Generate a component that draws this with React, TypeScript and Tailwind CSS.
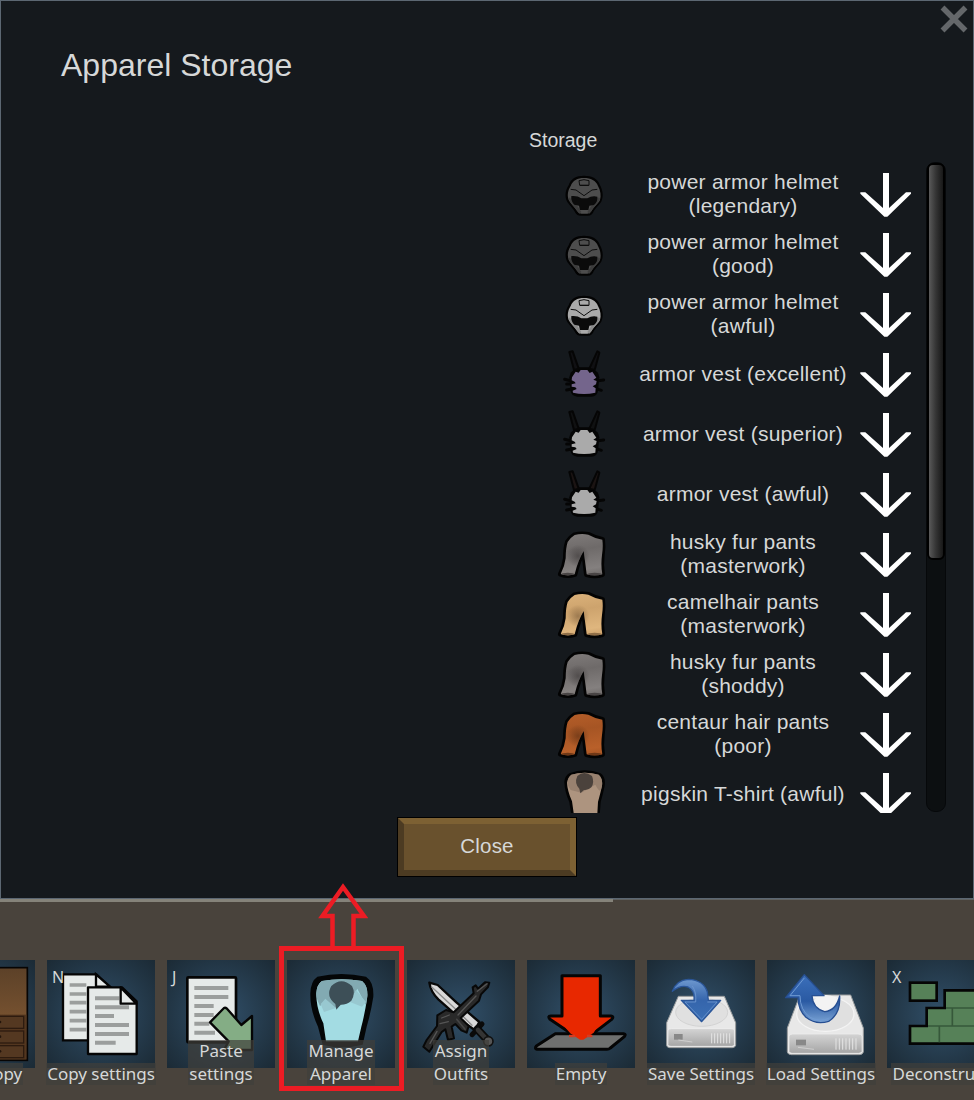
import React from "react";

const Helmet = ({ light, dark }: { light: string; dark: string }) => (
  <svg viewBox="42 12 180 180" className="h-[60px] w-[60px] shrink-0">
    <path d="M132 47 C108 47 92 56 86 76 C76 90 74 108 80 122 C86 134 98 142 106 158 Q111 167 122 167 L144 167 Q154 167 159 158 C166 142 180 134 185 122 C191 108 188 90 180 76 C174 56 156 47 132 47Z" fill="#030303" />
    <path d="M132 54 C112 54 98 62 92 78 C82 94 82 108 86 120 C92 132 104 140 112 154 Q116 161 124 161 L142 161 Q150 161 154 154 C162 138 174 132 180 120 C184 108 182 92 174 78 C168 62 152 54 132 54Z" fill={light} />
    <path d="M86 116 C92 132 104 140 112 154 L118 161 L124 156 L112 138 L96 126 L90 112Z M180 116 C174 132 162 140 154 154 L148 161 L142 156 L154 138 L170 126 L176 112Z" fill={dark} />
    <path d="M94 108 Q112 106 124 115 L142 115 Q156 106 172 110 Q175 124 162 135 L148 137 L145 150 L120 150 L117 137 L103 134 Q92 124 94 108Z" fill="#0b0b0b" />
    <path d="M92 88 L108 90 L132 107 L156 90 L172 88 M119 76 L117 62 Q132 56 147 62 L147 76Z M120 76 H146" fill="none" stroke="#0d0d0d" strokeWidth="3" />
  </svg>
);

const Vest = ({ body, strap }: { body: string; strap: string }) => (
  <svg viewBox="42 12 180 180" className="h-[60px] w-[60px] shrink-0">
    <path d="M110 82 L154 82 L174 98 L178 112 L174 152 Q172 169 154 170 L112 170 Q94 168 92 154 L88 112 L92 98Z" fill="#050505" />
    <path d="M88 36 L98 34 L116 86 L102 90Z M172 34 L178 38 L164 90 L148 86Z" fill={strap} stroke="#050505" strokeWidth="6" strokeLinejoin="round" />
    <path d="M74 118 l18 4 M174 122 l17 -2 M80 132 l16 0 M80 150 l20 -4 M168 146 l16 5" stroke="#050505" strokeWidth="9" strokeLinecap="round" />
    <path d="M107 95 L116 98 L122 90 L142 90 L149 99 L157 95 L169 113 L160 119 L170 123 L168 133 L158 139 L167 145 L166 158 Q132 166 99 158 L98 152 L110 147 L106 142 L95 140 L95 133 L107 130 L104 125 L95 121 L96 112Z" fill={body} />
  </svg>
);

const pantsPath =
  "M104 45 Q124 40 145 44 Q162 54 187 59 Q190 80 186 105 Q182 135 187 163 Q164 170 140 163 Q136 130 131 93 Q114 120 104 163 Q82 170 62 162 Q74 140 77 115 Q77 84 83 66 Q92 52 104 45Z";

const Pants = ({ id, light, mid, dark }: { id: string; light: string; mid: string; dark: string }) => (
  <svg viewBox="42 12 180 180" className="h-[60px] w-[60px] shrink-0">
    <defs>
      <linearGradient id={id} x1="0" y1="0" x2="0.15" y2="1">
        <stop offset="0" stopColor={light} />
        <stop offset="0.45" stopColor={mid} />
        <stop offset="0.85" stopColor={light} />
        <stop offset="1" stopColor={mid} />
      </linearGradient>
      <radialGradient id={id + "s"}>
        <stop offset="0" stopColor={dark} stopOpacity="0.8" />
        <stop offset="1" stopColor={dark} stopOpacity="0" />
      </radialGradient>
      <clipPath id={id + "c"}>
        <path d={pantsPath} />
      </clipPath>
    </defs>
    <path d={pantsPath} fill="#030303" stroke="#030303" strokeWidth="16" strokeLinejoin="round" />
    <g clipPath={`url(#${id}c)`}>
      <rect x="50" y="30" width="150" height="150" fill={`url(#${id})`} />
      <ellipse cx="114" cy="108" rx="34" ry="34" fill={`url(#${id}s)`} />
      <ellipse cx="83" cy="163" rx="20" ry="5" fill={dark} />
      <ellipse cx="164" cy="163" rx="22" ry="5" fill={dark} />
    </g>
  </svg>
);

const Shirt = () => (
  <svg viewBox="42 252 180 180" className="h-[60px] w-[60px] shrink-0">
    <path d="M88 280 Q134 262 182 280 Q198 292 194 318 Q188 346 182 366 L178 420 L96 420 L88 366 Q74 336 73 306 Q74 288 88 280Z" fill="#030303" />
    <path d="M94 284 Q134 272 176 284 Q189 296 186 318 Q180 344 174 366 L171 420 L104 420 L96 364 Q82 332 81 308 Q84 292 94 284Z" fill="#ad947f" />
    <path d="M94 284 Q134 272 176 284 Q189 296 186 318 L182 332 Q176 334 166 314 L124 338 L92 330 L82 314 Q82 292 94 284Z" fill="#8f7968" opacity="0.7" />
    <path d="M112 288 Q132 270 156 288 Q164 308 154 322 Q144 332 132 330 L121 340 L118 326 Q102 310 112 288Z" fill="#4b423c" />
  </svg>
);

const DownArrow = () => (
  <svg viewBox="948 12 180 180" className="h-[60px] w-[60px] shrink-0">
    <path d="M1029 39 H1047 V144 L1098 97 H1113 V101 L1042 170 H1033 L961 101 V97 H976 L1029 144Z" fill="#fff" />
  </svg>
);

const gray = { light: "#84807f", mid: "#6e6a69", dark: "#484444" };
const rows: { icon: React.ReactNode; lines: string[] }[] = [
  { icon: <Helmet light="#4d4d4d" dark="#3c3c3c" />, lines: ["power armor helmet", "(legendary)"] },
  { icon: <Helmet light="#4d4d4d" dark="#3c3c3c" />, lines: ["power armor helmet", "(good)"] },
  { icon: <Helmet light="#aaaaaa" dark="#8c8c8c" />, lines: ["power armor helmet", "(awful)"] },
  { icon: <Vest body="#74658c" strap="#101013" />, lines: ["armor vest (excellent)"] },
  { icon: <Vest body="#aaaaaa" strap="#101112" />, lines: ["armor vest (superior)"] },
  { icon: <Vest body="#aaaaaa" strap="#1b1413" />, lines: ["armor vest (awful)"] },
  { icon: <Pants id="p1" {...gray} />, lines: ["husky fur pants", "(masterwork)"] },
  { icon: <Pants id="p2" light="#dfb67e" mid="#cda36d" dark="#8f6e47" />, lines: ["camelhair pants", "(masterwork)"] },
  { icon: <Pants id="p3" {...gray} />, lines: ["husky fur pants", "(shoddy)"] },
  { icon: <Pants id="p4" light="#b9602a" mid="#a65524" dark="#6e3817" />, lines: ["centaur hair pants", "(poor)"] },
  { icon: <Shirt />, lines: ["pigskin T-shirt (awful)"] },
];

const Wardrobe = () => (
  <svg viewBox="-219 240 324 324" className="h-full w-full">
    <defs>
      <linearGradient id="wood" x1="0" y1="0" x2="0" y2="1">
        <stop offset="0" stopColor="#5c4128" />
        <stop offset="0.5" stopColor="#74502f" />
        <stop offset="1" stopColor="#4e331f" />
      </linearGradient>
    </defs>
    <rect x="-195" y="263" width="277" height="278" fill="url(#wood)" stroke="#070504" strokeWidth="5" />
    <rect x="-192" y="404" width="271" height="134" fill="#53361f" />
    {[409, 453, 497].map((y) => (
      <g key={y}>
        <rect x="-150" y={y} width="221" height="36" fill="#543821" stroke="#2d1b0f" strokeWidth="4" />
        <circle cx="0" cy={y + 17} r="4" fill="#24150c" />
      </g>
    ))}
  </svg>
);

const CopyIcon = () => (
  <svg viewBox="141 240 324 324" className="h-full w-full">
    <g stroke="#050505" strokeWidth="7" fill="#e6eae9">
      <path d="M189 283 H289 L338 330 V481 H189Z" />
      <path d="M288 283 V320 H330Z" />
    </g>
    <path d="M209 315h50M209 342h50M209 368h50M209 395h50M209 422h50M209 449h50" stroke="#9b9e9d" strokeWidth="11" />
    <g stroke="#050505" strokeWidth="7" fill="#e6eae9" strokeLinejoin="round">
      <path d="M264 322 H366 L410 364 V522 H264Z" />
      <path d="M285 355h73M285 382h102" stroke="#9b9e9d" strokeWidth="12" />
      <path d="M362 322 V371 H409Z" />
    </g>
    <path d="M285 408h57M285 435h102M285 462h102M285 488h62" stroke="#9b9e9d" strokeWidth="12" />
  </svg>
);

const PasteIcon = () => (
  <svg viewBox="501 240 324 324" className="h-full w-full">
    <rect x="562" y="292" width="146" height="195" rx="3" fill="#e6eae9" stroke="#050505" strokeWidth="8" />
    <path d="M583 324h102M583 351h102M583 378h58M583 405h58M583 431h45M583 458h62" stroke="#9b9e9d" strokeWidth="12" />
    <path d="M672 384 Q676 382 681 386 L724 435 L756 408 V510 H672 L686 484 L630 427Z" fill="#84ad85" stroke="#050505" strokeWidth="7" strokeLinejoin="round" />
  </svg>
);

const ManageIcon = () => (
  <svg viewBox="51 240 324 324" className="h-full w-full">
    <path d="M142 290 Q214 274 288 290 Q312 306 310 350 Q302 400 290 440 L278 494 Q214 510 158 494 L144 440 Q120 390 121 340 Q122 304 142 290Z" fill="#040607" />
    <path d="M156 303 Q214 292 276 303 Q294 318 292 350 Q284 404 274 440 L264 484 H168 L160 430 Q138 384 139 340 Q140 314 156 303Z" fill="#a3dce3" />
    <path d="M156 303 Q214 292 276 303 Q294 318 292 346 L288 376 L262 326 L246 354 L198 384 L166 366 L150 378 Q138 356 139 340 Q140 314 156 303Z" fill="#82aab2" />
    <path d="M258 330 L240 366 L276 380 L288 366Z M166 356 L198 384 L162 396 L152 372Z" fill="#98c8d0" />
    <path d="M184 318 Q214 290 246 318 Q258 340 244 362 Q232 374 212 374 L199 389 L196 372 Q166 348 184 318Z" fill="#3d4f57" />
  </svg>
);

const WeaponsIcon = () => (
  <svg viewBox="411 240 324 324" className="h-full w-full">
    <g strokeLinejoin="round" strokeLinecap="round">
      <path d="M478 308 L503 315 L560 368 L628 426 L614 450 L586 430 L505 358 Q482 336 478 308Z" fill="#d9d9d9" stroke="#080808" strokeWidth="7" />
      <path d="M486 322 L570 400 L606 436" fill="none" stroke="#8e8e8e" strokeWidth="4" />
      <path d="M636 432 L606 464" stroke="#0a0a0a" strokeWidth="15" />
      <path d="M622 448 L654 482" stroke="#0a0a0a" strokeWidth="24" />
      <path d="M624 450 L652 480" stroke="#343434" strokeWidth="14" />
      <circle cx="655" cy="484" r="14" fill="#555" stroke="#111" strokeWidth="5" />
      <path d="M608 322 L617 316 L624 326 L645 307 L658 308 L654 321 L633 343 L627 362 L588 399 L572 414 L596 438 L590 458 L574 451 L556 432 L545 440 L552 475 L534 480 L526 448 L515 456 L478 515 L460 500 L470 480 L501 438 L502 406 L528 390 L551 397 L611 340Z" fill="#292929" stroke="#080808" strokeWidth="6" />
      <path d="M622 334 L651 311 M618 348 L564 405 M515 414 L538 405 M510 431 L535 425 M501 454 L480 490" stroke="#555" strokeWidth="4" />
      <path d="M560 418 L585 448" stroke="#454545" strokeWidth="5" />
    </g>
  </svg>
);

const EmptyIcon = () => (
  <svg viewBox="36 210 324 324" className="h-full w-full">
    <path d="M121 431 H326 Q334 432 328 440 L286 474 Q282 478 276 478 H66 Q58 476 64 468Z" fill="#6f706f" stroke="#050505" strokeWidth="9" strokeLinejoin="round" />
    <path d="M141 257 H256 V378 H288 Q298 380 290 388 L238 428 H165 L105 388 Q97 378 107 378 H141Z" fill="#e82800" stroke="#050505" strokeWidth="9" strokeLinejoin="round" />
    <path d="M150 412 H246 L236 428 L205 449 H195 L166 430Z" fill="#e82800" />
    <path d="M162 438h18M216 438h16" stroke="#d43c22" strokeWidth="7" />
  </svg>
);

const Defs = () => (
  <defs>
    <linearGradient id="blue" x1="0" y1="0" x2="0" y2="1">
      <stop offset="0" stopColor="#6e98cf" />
      <stop offset="0.5" stopColor="#3565ac" />
      <stop offset="1" stopColor="#3c70b6" />
    </linearGradient>
    <linearGradient id="blue2" x1="0" y1="0" x2="0" y2="1">
      <stop offset="0" stopColor="#3c70bb" />
      <stop offset="0.55" stopColor="#2a5aa3" />
      <stop offset="1" stopColor="#79a2d4" />
    </linearGradient>
    <linearGradient id="front" x1="0" y1="0" x2="0" y2="1">
      <stop offset="0" stopColor="#d4d4d4" />
      <stop offset="1" stopColor="#a5a5a5" />
    </linearGradient>
  </defs>
);

const SaveIcon = () => (
  <svg viewBox="396 210 324 324" className="h-full w-full">
    <Defs />
    <path d="M490 319 H628 L662 398 V466 Q660 473 652 473 H464 Q456 473 455 466 V398Z" fill="#e8e8e8" stroke="#989b9c" strokeWidth="3" />
    <ellipse cx="560" cy="367" rx="78" ry="42" fill="#e0e0e0" stroke="#d3d3d3" strokeWidth="3" />
    <path d="M459 420 Q462 416 470 416 H648 Q656 416 658 420 V464 Q656 469 650 469 H468 Q460 469 459 464Z" fill="url(#front)" stroke="#f0f0f0" strokeWidth="2" />
    <rect x="477" y="432" width="26" height="17" fill="#888" />
    <path d="M490 450 L532 456" stroke="#ddd" strokeWidth="2" />
    <path d="M590 430v30M599 430v30M608 430v30M617 430v30M626 430v30M635 430v30M644 430v30" stroke="#e4e4e4" strokeWidth="3" />
    <path d="M472 304 Q484 270 520 268 Q566 270 577 306 L580 331 H617 L560 395 L499 331 H537 Q540 302 519 291 Q496 284 472 304Z" fill="url(#blue)" stroke="#2b5699" strokeWidth="4" strokeLinejoin="round" />
    <path d="M510 336 H542 Q545 306 532 288 M577 336 H606 L560 388 L510 336" fill="none" stroke="#6f98cf" strokeWidth="2.500" />
  </svg>
);

const LoadIcon = () => (
  <svg viewBox="51 210 324 324" className="h-full w-full">
    <path d="M150 315 H302 L340 414 V486 Q338 494 328 494 H124 Q114 494 112 486 V414Z" fill="#e8e8e8" stroke="#989b9c" strokeWidth="3" />
    <ellipse cx="226" cy="372" rx="86" ry="52" fill="#e0e0e0" stroke="#f4f4f4" strokeWidth="4" />
    <path d="M117 438 Q119 432 128 432 H324 Q334 432 336 438 V484 Q333 490 326 490 H126 Q119 490 117 484Z" fill="url(#front)" stroke="#f0f0f0" strokeWidth="2" />
    <rect x="138" y="449" width="30" height="17" fill="#888" />
    <path d="M144 472 L192 478" stroke="#ddd" strokeWidth="2" />
    <path d="M258 445v34M268 445v34M278 445v34M288 445v34M298 445v34M308 445v34M318 445v34" stroke="#e4e4e4" strokeWidth="3" />
    <ellipse cx="228" cy="342" rx="40" ry="27" fill="#f3f3f3" />
    <path d="M163 254 L222 317 H186 Q188 354 224 365 Q258 362 269 318 Q272 372 236 394 Q198 406 168 382 Q144 358 144 323 H107Z" fill="url(#blue2)" stroke="#274f92" strokeWidth="4" strokeLinejoin="round" />
    <path d="M163 264 L120 317 H150 Q150 360 180 382 Q212 398 238 384" fill="none" stroke="#6f9ad3" strokeWidth="3" />
  </svg>
);

const BricksIcon = () => (
  <svg viewBox="411 210 324 324" className="h-full w-full">
    <rect x="480" y="278" width="80" height="54" fill="#568158" stroke="#050505" strokeWidth="8" />
    <path d="M480 461 V408 H530 V354 H584 V301 H740 V461Z" fill="#568158" stroke="#050505" strokeWidth="8" />
    <path d="M588 354H740M534 408H740M607 354V408M568 408V457" stroke="#36583a" strokeWidth="5" />
  </svg>
);

const gizmos: { icon: React.ReactNode; label: string[]; hotkey?: string }[] = [
  { icon: <Wardrobe />, label: ["Build copy"] },
  { icon: <CopyIcon />, label: ["Copy settings"], hotkey: "N" },
  { icon: <PasteIcon />, label: ["Paste", "settings"], hotkey: "J" },
  { icon: <ManageIcon />, label: ["Manage", "Apparel"] },
  { icon: <WeaponsIcon />, label: ["Assign", "Outfits"] },
  { icon: <EmptyIcon />, label: ["Empty"] },
  { icon: <SaveIcon />, label: ["Save Settings"] },
  { icon: <LoadIcon />, label: ["Load Settings"] },
  { icon: <BricksIcon />, label: ["Deconstruct"], hotkey: "X" },
];

export default function App() {
  return (
    <div className="relative flex h-[1100px] w-[974px] flex-col overflow-hidden bg-[#49433c] font-['Liberation_Sans',Arial,sans-serif] text-[#d6d8d8]">
      <section className="flex h-[899px] shrink-0 flex-col border border-[#5c6772] bg-[#15191d]">
        <header className="flex h-[128px] items-start justify-between">
          <h1 className="mt-[45px] ml-[60px] text-[32px] leading-[38px]">Apparel Storage</h1>
          <svg viewBox="0 0 28 28" className="mt-[4px] mr-[5px] h-[28px] w-[28px]">
            <path d="M2.500 2.500 L25.500 25.500 M25.500 2.500 L2.500 25.500" stroke="#64676a" strokeWidth="5.500" />
          </svg>
        </header>
        <h2 className="ml-[528px] h-[33px] text-[19.500px] leading-[22px]">Storage</h2>
        <div className="flex h-[651px]">
          <ul className="mt-[2px] ml-[553px] h-[649px] w-[362px] overflow-hidden">
            {rows.map((row, i) => (
              <li key={i} className="flex h-[60px] items-center">
                {row.icon}
                <span className="ml-[16px] w-[226px] pb-px text-center text-[21px] leading-[24px] tracking-[0.25px] whitespace-nowrap">
                  {row.lines.map((line) => (
                    <span key={line} className="block">{line}</span>
                  ))}
                </span>
                <DownArrow />
              </li>
            ))}
          </ul>
          <div className="ml-[10px] h-[650px] w-[20px] rounded-[9px] border border-[#06080a] bg-[#0c0f11]">
            <div className="h-[397px] w-[18px] rounded-[6px] border-2 border-black bg-linear-to-r from-[#5a5a5a] via-[#343434] to-[#181818]" />
          </div>
        </div>
        <button className="mt-[4px] ml-[396px] flex h-[60px] w-[180px] border border-black bg-[#69512d]">
          <span className="flex h-full w-full items-center justify-center border-[6px] border-t-[#7d6133] border-r-[#7d6133] border-b-[#4c3b22] border-l-[#4c3b22] pb-[2px] text-[20.500px] tracking-[0.2px]">
            Close
          </span>
        </button>
      </section>
      <div className="flex h-[3px] shrink-0">
        <div className="h-[3px] w-[613px] bg-[#85837a]" />
        <div className="h-px flex-1 bg-[#5f6262]" />
      </div>
      <nav className="ml-[-73px] flex w-[1068px] shrink-0 gap-[12px] pt-[58px] font-['Noto_Sans',sans-serif]">
        {gizmos.map((g, i) => (
          <div key={i} className="relative h-[125px] w-[108px] shrink-0">
            <div className="h-[108px] w-[108px] bg-[#2a4457] bg-radial from-[#31506a] to-[#1b2a35]">{g.icon}</div>
            {g.hotkey && <span className="absolute top-[7px] left-[5px] text-[16px] leading-[20px]">{g.hotkey}</span>}
            <div className="absolute bottom-0 left-0 flex w-full flex-col items-center">
              <span className="bg-[#403e3a]/70 px-[1px] text-center text-[17px] leading-[22.500px] whitespace-nowrap">
                {g.label.map((l) => (
                  <span key={l} className="block">{l}</span>
                ))}
              </span>
            </div>
          </div>
        ))}
      </nav>
      <div className="absolute top-[946px] left-[279px] h-[145px] w-[125px] border-[5px] border-[#ec1c24]" />
      <svg viewBox="0 0 50 66" className="absolute top-[882px] left-[318px] h-[66px] w-[50px]">
        <path d="M14.500 65 V34 H4.500 L25 5 L46 34 H35.500 V65" fill="none" stroke="#ec1c24" strokeWidth="4.500" />
      </svg>
    </div>
  );
}
